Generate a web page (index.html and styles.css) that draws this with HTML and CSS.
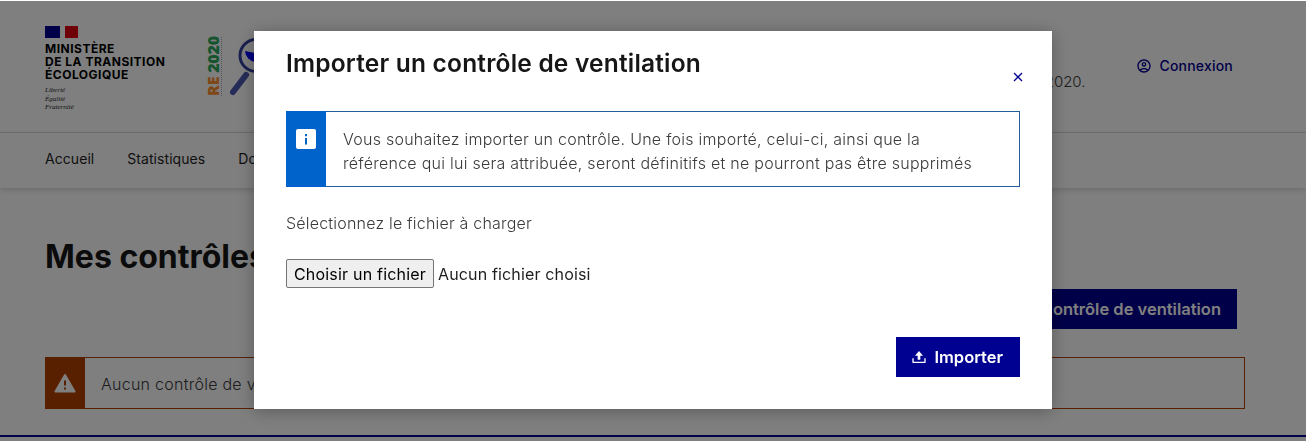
FILE: index.html
```html
<!DOCTYPE html>
<html lang="fr">

<head>
    <meta charset="UTF-8">
    <meta name="viewport" content="width=device-width, initial-scale=1.0">
    <title>Mes contrôles</title>
    <link rel="stylesheet" href="styles.css">
</head>

<body>
    <header class="header">
        <div class="brand">
            <div class="flag"><span class="flag-blue"></span><span class="flag-white"></span><span class="flag-red"></span></div>
            <div class="ministry">MINISTÈRE<br>DE LA TRANSITION<br>ÉCOLOGIQUE</div>
            <div class="motto">Liberté<br>Égalité<br>Fraternité</div>
        </div>
        <div class="re-logo">
            <div class="re-text"><span class="re-orange">RE</span> <span class="re-green">2020</span></div>
            <svg class="re-glass" width="50" height="62" viewBox="0 0 50 62">
                <circle cx="27" cy="18.500" r="16" fill="none" stroke="#343fa0" stroke-width="3"/>
                <path d="M16 14a12 12 0 0 0 10 11l0-9z" fill="#0000ff"/>
                <path d="M17 38L4 55" stroke="#4a58b0" stroke-width="6" stroke-linecap="round"/>
            </svg>
        </div>
        <p class="tagline">Le service de contrôle des systèmes de ventilation conforme à la RE2020.</p>
        <a class="login" href="#">
            <svg width="16" height="16" viewBox="0 0 24 24"><path fill="#000091" d="M12 2C6.48 2 2 6.48 2 12s4.48 10 10 10 10-4.48 10-10S17.52 2 12 2zM7.35 18.5C8.66 17.56 10.26 17 12 17s3.34.56 4.65 1.5C15.34 19.44 13.74 20 12 20s-3.34-.56-4.65-1.5zm10.79-1.38C16.45 15.8 14.32 15 12 15s-4.45.8-6.14 2.12C4.7 15.73 4 13.95 4 12c0-4.42 3.58-8 8-8s8 3.58 8 8c0 1.95-.7 3.73-1.86 5.12zM12 6c-1.93 0-3.5 1.57-3.5 3.5S10.07 13 12 13s3.5-1.57 3.5-3.5S13.93 6 12 6zm0 5c-.83 0-1.5-.67-1.5-1.5S11.17 8 12 8s1.5.67 1.5 1.5S12.83 11 12 11z"/></svg>
            Connexion
        </a>
    </header>

    <nav class="nav">
        <a href="#">Accueil</a>
        <a href="#">Statistiques</a>
        <a href="#">Documentation</a>
    </nav>

    <main class="main">
        <h1 class="page-title">Mes contrôles</h1>
        <div class="actions">
            <a class="btn" href="#">Importer un contrôle de ventilation</a>
        </div>
        <div class="alert alert-warning">
            <div class="alert-side">
                <svg width="24" height="24" viewBox="0 0 24 24"><path fill="#fff" d="M12.87 3.5l9.53 16.5a1 1 0 0 1-.87 1.5H2.47a1 1 0 0 1-.87-1.5l9.53-16.5a1 1 0 0 1 1.74 0zM11 16.5v2h2v-2h-2zm0-7v5h2v-5h-2z"/></svg>
            </div>
            <p>Aucun contrôle de ventilation n'a été importé pour le moment.</p>
        </div>
    </main>

    <footer class="footer"></footer>

    <div class="overlay">
        <div class="modal">
            <div class="modal-head">
                <h2 class="modal-title">Importer un contrôle de ventilation</h2>
                <a class="modal-close" href="#">
                    <svg width="10" height="10" viewBox="0 0 10 10"><path d="M1 1l8 8M9 1L1 9" stroke="#000091" stroke-width="1.3"/></svg>
                </a>
            </div>

            <div class="alert alert-info">
                <div class="alert-side">
                    <svg width="24" height="24" viewBox="0 0 24 24"><path fill="#fff" d="M4 2h16a2 2 0 0 1 2 2v16a2 2 0 0 1-2 2H4a2 2 0 0 1-2-2V4a2 2 0 0 1 2-2zm7 5v2.200h2V7zM11 11v6.500h2V11z"/></svg>
                </div>
                <p>Vous souhaitez importer un contrôle. Une fois importé, celui-ci, ainsi que la<br>référence qui lui sera attribuée, seront définitifs et ne pourront pas être supprimés</p>
            </div>

            <label class="file-label" for="file">Sélectionnez le fichier à charger</label>
            <div class="file-row">
                <button class="file-button" id="file" type="button">Choisir un fichier</button>
                <span class="file-name">Aucun fichier choisi</span>
            </div>

            <div class="modal-foot">
                <button class="btn btn-icon" type="button">
                    <svg width="16" height="16" viewBox="0 0 24 24"><path fill="#fff" d="M4 19h16v-5h2v6a1 1 0 0 1-1 1H3a1 1 0 0 1-1-1v-6h2v5zM14 10v6h-4v-6H6l6-7 6 7h-4z"/></svg>
                    Importer
                </button>
            </div>
        </div>
    </div>
</body>

</html>
```

FILE: styles.css
```css
* {
    margin: 0;
    padding: 0;
    box-sizing: border-box;
}

body {
    font-family: "Inter", "Liberation Sans", sans-serif;
    color: #1e1e1e;
    background-color: #fff;
    height: 441px;
    overflow: hidden;
}

a {
    text-decoration: none;
    color: inherit;
}

.header {
    height: 133px;
    padding: 26px 73px 0 45px;
    border-bottom: 1px solid #ddd;
    display: flex;
    align-items: flex-start;
}

.brand {
    width: 160px;
}

.flag {
    width: 33px;
    height: 12px;
    display: flex;
}

.flag-blue {
    flex: 15;
    background-color: #000091;
}

.flag-white {
    flex: 5;
    background-color: #fff;
}

.flag-red {
    flex: 13;
    background-color: #e1000f;
}

.ministry {
    margin-top: 4px;
    font-size: 12px;
    line-height: 13px;
    font-weight: 700;
    letter-spacing: .5px;
    color: #000;
}

.motto {
    margin-top: 5px;
    font-family: "Liberation Serif", serif;
    font-style: italic;
    font-size: 7px;
    line-height: 8.5px;
}

.re-logo {
    display: flex;
    width: 242px;
    margin-top: 11px;
}

.re-text {
    writing-mode: vertical-rl;
    transform: rotate(180deg);
    font-family: "Open Sans", sans-serif;
    font-size: 16px;
    line-height: 16px;
    font-weight: 800;
    letter-spacing: -.2px;
    height: 59px;
    border-left: 1px dotted #aaa;
    white-space: nowrap;
}

.re-orange {
    color: #ff9030;
}

.re-green {
    color: #2aa85a;
}

.re-glass {
    margin-left: 7px;
}

.tagline {
    flex: 1;
    margin-top: 47px;
    font-size: 15px;
    line-height: 18px;
    font-weight: 300;
    text-align: right;
    color: #3a3a3a;
    white-space: nowrap;
}

.login {
    margin: 31px 0 0 50px;
    display: flex;
    align-items: center;
    gap: 8px;
    font-size: 14px;
    font-weight: 500;
    letter-spacing: .2px;
    color: #000091;
}

.nav {
    height: 55px;
    padding: 0 45px 4px;
    display: flex;
    align-items: center;
    gap: 33px;
    font-size: 14px;
    letter-spacing: .06px;
    box-shadow: 0 2px 6px rgba(0, 0, 0, .16);
}

.main {
    padding: 51px 61px 0 45px;
}

.page-title {
    font-size: 32px;
    line-height: 36px;
    font-weight: 700;
    color: #161616;
}

.actions {
    margin-top: 14px;
    display: flex;
    justify-content: flex-end;
    padding-right: 8px;
}

.btn {
    height: 40px;
    padding: 0 16px;
    display: inline-flex;
    align-items: center;
    gap: 7px;
    background-color: #000091;
    color: #fff;
    border: 0;
    font-family: inherit;
    font-size: 16.500px;
    font-weight: 600;
}

.btn-icon {
    padding: 0 17px 0 15px;
}

.alert {
    display: flex;
    border: 1px solid;
}

.alert-side {
    flex: none;
    width: 40px;
    margin: -1px 0 -1px -1px;
    display: flex;
    justify-content: center;
}

.alert p {
    font-size: 16px;
    font-weight: 300;
    line-height: 24px;
    letter-spacing: .26px;
    color: #3a3a3a;
}

.alert-warning {
    margin-top: 28px;
    height: 52px;
    border-color: #b34000;
}

.alert-warning .alert-side {
    background-color: #b34000;
    align-items: center;
}

.alert-warning p {
    padding: 14px 0 0 16px;
}

.alert-info {
    height: 76px;
    border-color: #1f5f9f;
}

.alert-info .alert-side {
    padding-top: 16px;
    background-color: #0063cb;
}

.alert-info p {
    padding: 15px 0 0 17px;
}

.footer {
    margin-top: 26px;
    border-top: 2px solid #000091;
}

.overlay {
    position: fixed;
    top: 1px;
    left: 0;
    right: 0;
    bottom: 0;
    background-color: rgba(0, 0, 0, .5);
}

.modal {
    position: absolute;
    top: 30px;
    left: 254px;
    width: 798px;
    height: 378px;
    padding: 0 32px;
    background-color: #fff;
    box-shadow: 0 2px 16px rgba(0, 0, 0, .3);
}

.modal-head {
    display: flex;
    justify-content: space-between;
    padding-top: 18px;
    height: 80px;
}

.modal-title {
    font-size: 24.500px;
    line-height: 28px;
    font-weight: 600;
    letter-spacing: .2px;
    color: #161616;
}

.modal-close {
    margin: 17px -3px 0 0;
    height: 16px;
}

.file-label {
    display: block;
    margin-top: 25px;
    font-size: 16px;
    line-height: 22px;
    font-weight: 300;
    letter-spacing: .2px;
    color: #3a3a3a;
}

.file-row {
    margin-top: 25px;
    display: flex;
    align-items: center;
    gap: 4px;
    font-size: 16px;
    letter-spacing: .15px;
}

.file-button {
    width: 148px;
    height: 29px;
    background-color: #efefef;
    border: 1px solid #767676;
    border-radius: 2px;
    font-family: inherit;
    font-size: 16px;
    letter-spacing: .2px;
    color: #000;
}

.file-name {
    color: #1e1e1e;
}

.modal-foot {
    margin-top: 49px;
    display: flex;
    justify-content: flex-end;
}
```
